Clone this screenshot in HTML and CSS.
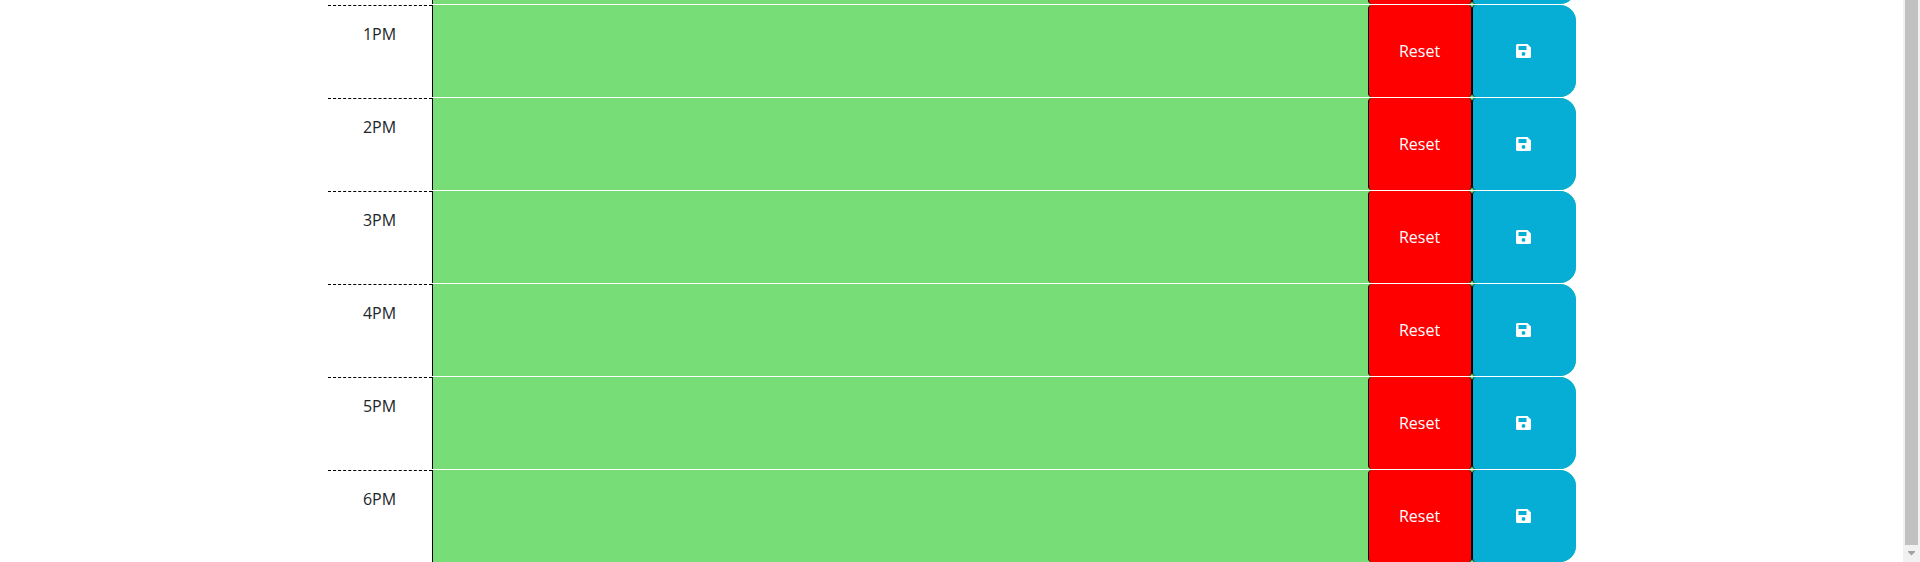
FILE: index.html
```html
<!DOCTYPE html>
<html lang="en">
<head>
<meta charset="utf-8">
<title>Work Day Scheduler</title>
<link rel="stylesheet" href="styles.css">
<script src="script.js" defer></script>
</head>
<body>
<svg class="defs" aria-hidden="true"><symbol id="save" viewBox="0 0 16 14"><path fill-rule="evenodd" d="M1.5 0H11.5L15 3.5V12.5Q15 14 13.500 14H1.500Q0 14 0 12.500V1.500Q0 0 1.500 0ZM2.500 2V6H10.500V2ZM7.500 8A1.900 1.900 0 1 0 7.500 11.800A1.900 1.900 0 1 0 7.500 8Z"/></symbol></svg>
<main class="page">
  <div class="schedule" id="schedule"></div>
</main>
<div class="scroll" aria-hidden="true">
  <div class="thumb"></div>
  <svg class="arrow" viewBox="0 0 17 17"><path d="M5 6H12V7L8.500 10.500L5 7Z"/></svg>
</div>
</body>
</html>
```
FILE: styles.css
```css
* { box-sizing: border-box; }
body {
  margin: 0;
  height: 100vh;
  display: flex;
  overflow: hidden;
  background: #fff;
  color: #212529;
  font: 16px/24px "Open Sans", "Noto Sans", sans-serif;
}
.defs { display: none; }
.page {
  flex: 1;
  display: flex;
  flex-direction: column;
  justify-content: flex-end;
}
.schedule {
  width: 100%;
  max-width: 1248px;
  margin: 0 auto;
}
.row {
  display: grid;
  grid-template-columns: 1fr 9fr 1fr 1fr;
  margin-top: 1px;
  background: #77de77;
  border-radius: 0 16px 16px 0;
}
.hour {
  padding-top: 16px;
  text-align: center;
  background: #fff;
  border-top: 1px dashed #000;
}
.entry {
  display: block;
  width: 100%;
  height: 92px;
  padding: 6px;
  border: 0;
  border-left: 1px solid #000;
  background: #77de77;
  color: #000;
  font: inherit;
  resize: none;
  outline: 0;
}
.btn {
  padding: 0;
  border: 0 solid #000;
  border-left-width: 1px;
  border-radius: 4px;
  color: #fff;
  font: inherit;
  cursor: pointer;
}
.reset {
  border-right-width: 1px;
  background: #f00;
}
.save {
  border-radius: 4px 16px 16px 4px;
  background: #06aed5;
}
.icon {
  display: block;
  width: 16px;
  height: 14px;
  margin: 0 auto;
  fill: #fff;
}
.scroll {
  width: 17px;
  display: flex;
  flex-direction: column;
  background: #f1f1f1;
}
.thumb {
  flex: 1;
  margin: 0 2px;
  background: #c1c1c1;
}
.arrow {
  width: 17px;
  height: 17px;
  fill: #a3a3a3;
}
```
FILE: script.js
```js
const schedule = document.getElementById("schedule");
["12PM", "1PM", "2PM", "3PM", "4PM", "5PM", "6PM"].forEach((hour) => {
  const row = document.createElement("div");
  row.className = "row";
  row.innerHTML = `
    <label class="hour" for="entry-${hour}">${hour}</label>
    <textarea class="entry" id="entry-${hour}"></textarea>
    <button class="btn reset" type="button">Reset</button>
    <button class="btn save" type="button" aria-label="Save ${hour}"><svg class="icon"><use href="#save"/></svg></button>`;
  schedule.append(row);
});
```
